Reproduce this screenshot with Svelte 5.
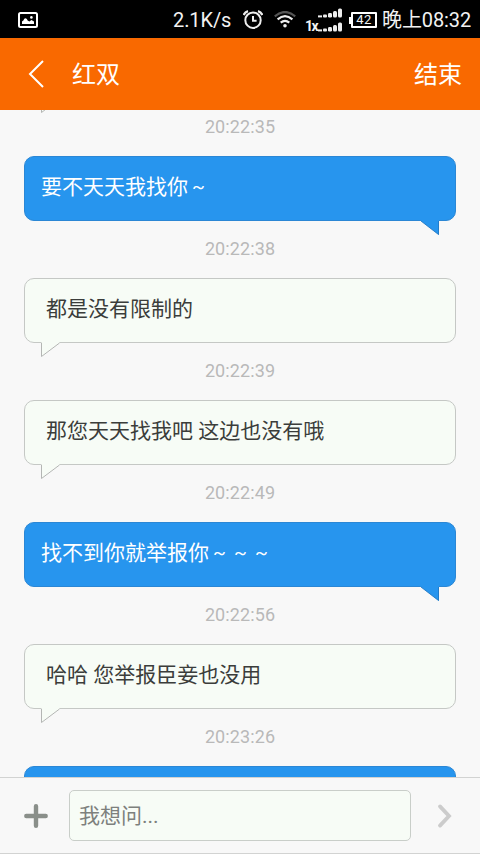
<script>
  const messages = [
    { mine: false, time: '', text: '' },
    { mine: true, time: '20:22:35', text: '要不天天我找你～' },
    { mine: false, time: '20:22:38', text: '都是没有限制的' },
    { mine: false, time: '20:22:39', text: '那您天天找我吧 这边也没有哦' },
    { mine: true, time: '20:22:49', text: '找不到你就举报你～～～' },
    { mine: false, time: '20:22:56', text: '哈哈 您举报臣妾也没用' },
    { mine: true, time: '20:23:26', text: '' }
  ];
  // Full-width tildes are drawn as a narrow tilde centred in a full-width cell.
  const split = (text) => [text.replace(/～+$/, ''), [...(text.match(/～+$/)?.[0] ?? '')]];
</script>

<div class="screen">
  <div class="status">
    <svg class="photo" width="20" height="16" viewBox="0 0 20 16">
      <rect x="1" y="1" width="18" height="14" rx="1.5" fill="none" stroke="#fff" stroke-width="2" />
      <path d="M4 12V9.6Q4.4 8.6 5.4 8.4Q6 6.2 7.6 6.2Q9.2 6.4 9.6 8.6L11.4 9.4L13.4 8L16 9.4V12Z" fill="#fff" />
      <circle cx="13.4" cy="5.4" r="1.3" fill="#fff" />
    </svg>
    <span class="speed">2.1K/s</span>
    <svg class="alarm" width="20" height="20" viewBox="0 0 20 20" fill="none" stroke="#eee">
      <circle cx="10" cy="10.2" r="7.7" stroke-width="2" />
      <path d="M10 6V10.8H13.6" stroke-width="2" />
      <path d="M.7 5Q1.8 2 5 1.1M19.3 5Q18.2 2 15 1.1" stroke-width="2.2" />
    </svg>
    <svg class="wifi" width="22" height="17" viewBox="0 0 22 17" fill="none">
      <path d="M.8 5.3Q11-3.3 21.2 5.3" stroke="#555" stroke-width="2.2" />
      <path d="M3.6 8.4Q11 2 18.4 8.4M6.7 11.6Q11 8 15.3 11.6" stroke="#eee" stroke-width="2.2" />
      <circle cx="11" cy="14.7" r="1.8" fill="#eee" />
    </svg>
    <span class="net">1x</span>
    <svg class="signal" width="25" height="24" viewBox="0 0 25 24" fill="#eee">
      {#each [0, 14] as y}
        <rect x="0" y={y + 7.4} width="4" height="2" />
        <rect x="5" y={y + 6.6} width="4" height="3" rx="1" />
        <rect x="10" y={y + 5} width="4" height="4.6" rx="1.4" />
        <rect x="15" y={y + 3} width="4" height="6.6" rx="1.5" />
        <rect x="20" y={y + 0.4} width="4" height="9.2" rx="1.5" />
      {/each}
    </svg>
    <div class="battery"><i></i><b>42</b></div>
    <span class="clock">晚上08:32</span>
  </div>

  <header>
    <svg width="18" height="30" viewBox="0 0 18 30"><path d="M16 2L3 15L16 28" fill="none" stroke="#fff" stroke-width="2" /></svg>
    <span class="title">红双</span>
    <span class="end">结束</span>
  </header>

  <main>
    {#each messages as m}
      {@const [body, tildes] = split(m.text)}
      {#if m.time}<div class="time">{m.time}</div>{/if}
      <div class="bubble" class:mine={m.mine}>
        <span>{body}{#each tildes as _}<span class="tilde">~</span>{/each}</span>
        {#if m.mine}
          <svg class="tail" width="19" height="17" viewBox="0 0 19 17"><path d="M0 0H19V16L1 2Z" fill="#2795ee" /><path d="M1 2L18.5 15.5V2" fill="none" stroke="#2379c4" stroke-width=".9" /></svg>
        {:else}
          <svg class="tail" width="19" height="17" viewBox="0 0 19 17"><path d="M.5 0V15.8L18.5 2V0Z" fill="#f7fcf6" /><path d="M.5 2V15.5L18.5 2" fill="none" stroke="#b4b6b4" /></svg>
        {/if}
      </div>
    {/each}
  </main>

  <footer>
    <svg class="plus" width="24" height="24" viewBox="0 0 24 24"><path d="M12 2.3V21.7M2.3 12H21.7" stroke="#8a8f8a" stroke-width="4.4" stroke-linecap="round" /></svg>
    <div class="input">我想问...</div>
    <svg class="send" width="16" height="26" viewBox="0 0 16 26"><path d="M3 3.4L12 13L3 22.6" fill="none" stroke="#ccc" stroke-width="3.8" stroke-linecap="round" /></svg>
  </footer>
</div>

<style>
  :global(body) { overflow: hidden; }
  .screen {
    width: 480px; height: 854px; display: flex; flex-direction: column; overflow: hidden;
    background: #f8f8f8; font-family: Roboto, "Noto Sans CJK SC", sans-serif; white-space: nowrap;
  }
  svg { display: block; flex: none; }
  .status {
    height: 38px; flex: none; display: flex; align-items: center; box-sizing: border-box;
    background: #000; color: #f2f2f2; padding: 2px 0 0 18px; font-size: 20px;
  }
  .speed { width: 58px; margin-left: 135px; letter-spacing: -.1px; }
  .alarm { margin-left: 12px; margin-top: -1px; }
  .wifi { margin-left: 11px; margin-top: -1px; }
  .net { margin-left: 9px; width: 12px; font: 700 14px/14px Roboto, sans-serif; margin-top: 12px; letter-spacing: -1.5px; }
  .signal { margin-left: 1px; margin-top: -1px; }
  .battery { display: flex; align-items: center; margin-left: 6px; }
  .battery i { width: 2px; height: 7px; background: #fff; }
  .battery b {
    width: 26px; height: 16px; box-sizing: border-box; border: 2px solid #fff; border-radius: 1px;
    font: 400 13px/12px Roboto, sans-serif; letter-spacing: .5px; text-align: center;
  }
  .clock { margin-left: 5px; margin-top: -3px; letter-spacing: -.1px; }
  header {
    height: 72px; flex: none; display: flex; align-items: center; box-sizing: border-box;
    padding: 0 18px 0 27px; background: #f96900; color: #fff; font-size: 24px;
  }
  .title { margin-left: 27px; }
  .end { margin-left: auto; }
  .title, .end { line-height: 30px; padding-top: 2px; }
  main { height: 667px; flex: none; overflow: hidden; }
  .time { height: 57px; line-height: 56px; text-align: center; font-size: 18px; color: #b9b9b9; letter-spacing: .1px; }
  .bubble {
    position: relative; height: 65px; box-sizing: border-box; margin: 0 24px; padding: 0 21px 8px;
    display: flex; align-items: center; border: 1px solid #c5c8c5; border-radius: 10px;
    background: #f7fcf6; color: #3b3d3b; font-size: 21px;
  }
  .bubble:first-child { margin-top: -76px; }
  .bubble.mine { border-color: #2b87d5; background: #2795ee; color: #fff; padding-left: 16px; }
  .tilde { display: inline-block; width: 21px; text-align: center; font-size: 19px; line-height: 18px; vertical-align: 1px; }
  .tail { position: absolute; left: 16px; top: 62px; }
  .mine .tail { left: auto; right: 16px; }
  footer {
    height: 77px; flex: none; box-sizing: border-box; display: flex; align-items: center;
    border-top: 1px solid #d2d3d2; border-bottom: 1px solid #d2d3d2; padding: 0 24px;
  }
  .input {
    width: 342px; height: 51px; flex: none; box-sizing: border-box; margin-left: 21px; padding-left: 9px;
    border: 1px solid #c9cec9; border-radius: 5px; background: #f7fcf6; color: #7d807d;
    font-size: 21px; line-height: 50px;
  }
  .send { margin-left: 26px; }
</style>
